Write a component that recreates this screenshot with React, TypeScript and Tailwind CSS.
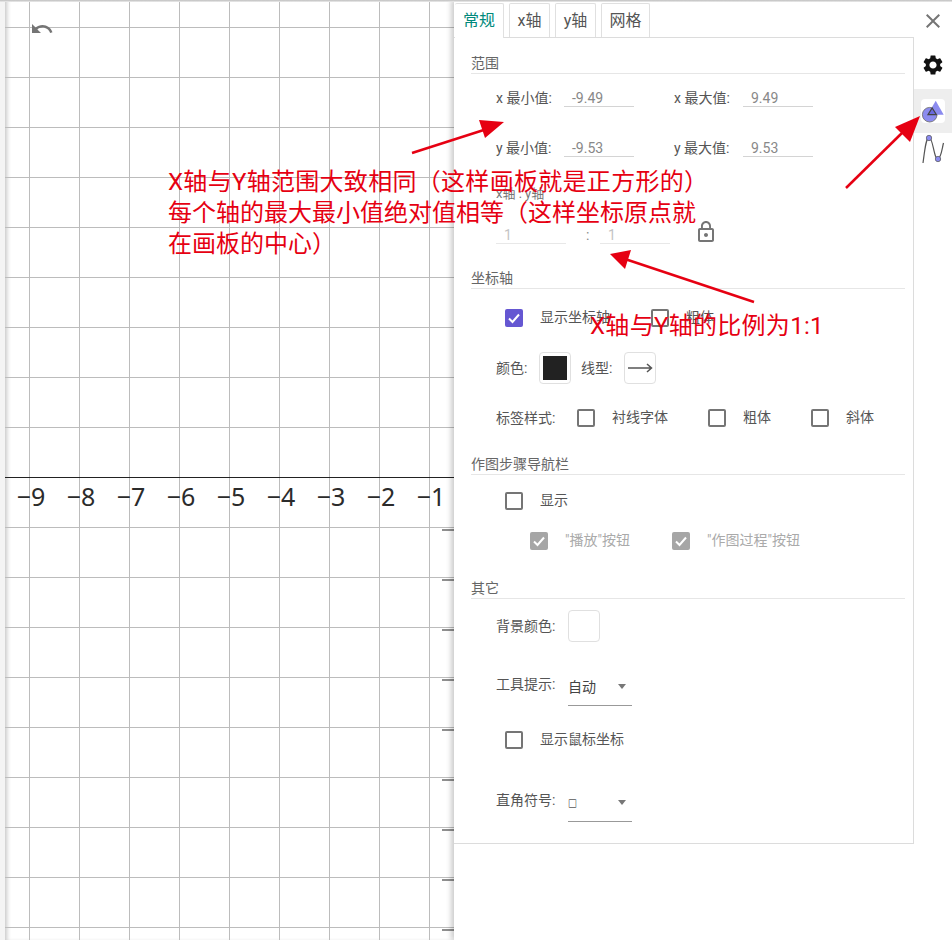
import type { ReactNode } from 'react';
import { MdClose, MdLockOutline, MdSettings, MdUndo } from 'react-icons/md';

const font = "font-['Roboto','Noto_Sans_CJK_SC',sans-serif]";
const xTicks = [-9, -8, -7, -6, -5, -4, -3, -2, -1];
const vLines = [29.5, 79.5, 129.5, 179.5, 229.5, 279.5, 329.5, 379.5, 429.5];
const hLines = [27.5, 77.5, 127.5, 177.5, 227.5, 277.5, 327.5, 377.5, 427.5, 527.5, 577.5, 627.5, 677.5, 727.5, 777.5, 827.5, 877.5, 927.5];
const yTicks = [530, 580, 630, 680, 730, 780, 830, 880, 930];

function Heading({ children, className }: { children: ReactNode; className: string }) {
  return (
    <div className={`h-[21px] border-b border-[#e6e6e6] text-[14px] leading-[20px] text-[#666] ${className}`}>
      {children}
    </div>
  );
}

function Checkbox({ checked, disabled }: { checked?: boolean; disabled?: boolean }) {
  if (checked) {
    return (
      <span className={`flex h-[18px] w-[18px] shrink-0 items-center justify-center rounded-[2px] ${disabled ? 'bg-[#a6a6a6]' : 'bg-[#6557d2]'}`}>
        <svg width="14" height="14" viewBox="0 0 14 14" fill="none">
          <path d="M2 7.5 L5.5 11 L12 3.5" stroke="#fff" strokeWidth="2" />
        </svg>
      </span>
    );
  }
  return <span className="h-[18px] w-[18px] shrink-0 rounded-[2px] border-2 border-[#757575]" />;
}

function Field({ value, faint, width = 'w-[70px]' }: { value: string; faint?: boolean; width?: string }) {
  return (
    <div className={`h-[21px] ${width} border-b pl-[8px] pt-[3px] leading-[18px] ${faint ? 'border-[#e8e8e8] text-[#c4c4c4]' : 'border-[#d4d4d4] text-[#888]'}`}>
      {value}
    </div>
  );
}

function Select({ children }: { children: ReactNode }) {
  return (
    <div className="flex h-[39px] w-[64px] items-center justify-between border-b border-[#999] pr-[6px] pt-[2px] text-[#444]">
      {children}
      <svg width="8" height="5" viewBox="0 0 8 5" className="mb-[2px]">
        <path d="M0 0 H8 L4 5 Z" fill="#777" />
      </svg>
    </div>
  );
}

export default function App() {
  return (
    <div className={`relative flex h-[940px] w-[952px] overflow-hidden bg-white text-[14px] ${font}`}>
      <div className="absolute left-0 top-0 z-20 h-[2px] w-full bg-gradient-to-b from-[#bdbdbd] to-[#eeeeee]" />

      {/* Left strip */}
      <div className="w-[5px] shrink-0 bg-[#f4f4f4]" />

      {/* Graphics view */}
      <div className="relative w-[449px] shrink-0 shadow-[inset_4px_0_4px_-2px_rgba(0,0,0,0.22)]">
        <svg width="449" height="940" viewBox="5 0 449 940" className="absolute left-0 top-0">
          {vLines.map((x) => (
            <line key={x} x1={x} x2={x} y1="0" y2="940" stroke="#bcbcbc" />
          ))}
          {hLines.map((y) => (
            <line key={y} x1="5" x2="454" y1={y} y2={y} stroke="#bcbcbc" />
          ))}
          <line x1="5" x2="454" y1="477.5" y2="477.5" stroke="#222" />
          {yTicks.map((y) => (
            <line key={y} x1="442" x2="454" y1={y} y2={y} stroke="#444" strokeWidth="1.2" />
          ))}
          {xTicks.map((n, i) => (
            <text
              key={n}
              x={31 + i * 50}
              y="506"
              textAnchor="middle"
              fill="#2b2b2b"
              className="font-['Noto_Sans',sans-serif] text-[25px]"
            >
              {`\u2212${-n}`}
            </text>
          ))}
        </svg>
        <MdUndo size={24} className="absolute left-[25px] top-[17px] text-[#757575]" />
      </div>

      {/* Settings panel */}
      <div className="relative z-10 flex w-[498px] shrink-0 shadow-[-3px_0_5px_rgba(0,0,0,0.2)]">
        <div className="w-[460px] shrink-0">
          {/* Tabs */}
          <div className="flex h-[37px] items-end gap-[5px] pl-[1px] pt-[3px] text-[16px]">
            <div className="relative z-10 -mb-px flex h-[35px] w-[49px] items-center justify-center rounded-t-[2px] border-r border-t border-[#e0e0e0] bg-white text-[#00897b]">常规</div>
            <div className="flex h-[34px] w-[41px] items-center justify-center rounded-t-[2px] border border-b-0 border-[#e0e0e0] text-[#555]">x轴</div>
            <div className="flex h-[34px] w-[41px] items-center justify-center rounded-t-[2px] border border-b-0 border-[#e0e0e0] text-[#555]">y轴</div>
            <div className="flex h-[34px] w-[49px] items-center justify-center rounded-t-[2px] border border-b-0 border-[#e0e0e0] text-[#555]">网格</div>
          </div>

          <div className="h-[807px] border-b border-r border-t border-[#dcdcdc] pl-[17px] pr-[8px] text-[#555]">
            <Heading className="mt-[15px]">范围</Heading>
            <div className="ml-[25px] mt-[12px] flex items-end">
              <span className="w-[68px] leading-[18px]">x 最小值:</span>
              <Field value="-9.49" />
              <span className="ml-[40px] w-[69px] leading-[18px]">x 最大值:</span>
              <Field value="9.49" />
            </div>
            <div className="ml-[25px] mt-[29px] flex items-end">
              <span className="w-[68px] leading-[18px]">y 最小值:</span>
              <Field value="-9.53" />
              <span className="ml-[40px] w-[69px] leading-[18px]">y 最大值:</span>
              <Field value="9.53" />
            </div>
            <div className="ml-[25px] mt-[27px] h-[20px] text-[13px] leading-[20px] text-[#777]">x轴 : y轴</div>
            <div className="ml-[25px] mt-[19px] flex items-end">
              <Field value="1" faint />
              <span className="w-[34px] pl-[20px] leading-[18px] text-[#888]">:</span>
              <Field value="1" faint />
              <MdLockOutline size={24} className="-mb-[3px] -mt-[3px] ml-[24px] self-start text-[#757575]" />
            </div>

            <Heading className="mt-[24px]">坐标轴</Heading>
            <div className="ml-[34px] mt-[17px] flex h-[24px] items-center">
              <Checkbox checked />
              <span className="ml-[17px] w-[111px] pb-[2px]">显示坐标轴</span>
              <Checkbox />
              <span className="ml-[17px] pb-[2px]">粗体</span>
            </div>
            <div className="ml-[25px] mt-[22px] flex h-[32px] items-center">
              <span className="w-[43px]">颜色:</span>
              <div className="flex h-[32px] w-[32px] items-center justify-center rounded-[4px] border border-[#e0e0e0]">
                <div className="h-[24px] w-[24px] bg-[#222]" />
              </div>
              <span className="ml-[10px] w-[43px]">线型:</span>
              <div className="flex h-[32px] w-[32px] items-center justify-center rounded-[4px] border border-[#e0e0e0]">
                <svg width="26" height="12" viewBox="0 0 26 12" fill="none">
                  <path d="M1 6 H24.5 M20 2 L24.5 6 L20 10" stroke="#555" strokeWidth="1.5" />
                </svg>
              </div>
            </div>
            <div className="ml-[25px] mt-[22px] flex h-[24px] items-center">
              <span className="w-[81px]">标签样式:</span>
              <Checkbox />
              <span className="ml-[17px] w-[96px] pb-[2px]">衬线字体</span>
              <Checkbox />
              <span className="ml-[17px] w-[68px] pb-[2px]">粗体</span>
              <Checkbox />
              <span className="ml-[17px] pb-[2px]">斜体</span>
            </div>

            <Heading className="mt-[24px]">作图步骤导航栏</Heading>
            <div className="ml-[34px] mt-[14px] flex h-[24px] items-center">
              <Checkbox />
              <span className="ml-[17px] pb-[2px]">显示</span>
            </div>
            <div className="ml-[59px] mt-[16px] flex h-[24px] items-center text-[#aaa]">
              <Checkbox checked disabled />
              <span className="ml-[17px] w-[107px] pb-[2px]">"播放"按钮</span>
              <Checkbox checked disabled />
              <span className="ml-[17px] pb-[2px]">"作图过程"按钮</span>
            </div>

            <Heading className="mt-[25px]">其它</Heading>
            <div className="ml-[25px] mt-[11px] flex h-[32px] items-center">
              <span className="w-[72px]">背景颜色:</span>
              <div className="h-[32px] w-[32px] rounded-[4px] border border-[#e0e0e0]" />
            </div>
            <div className="ml-[25px] mt-[25px] flex h-[39px] items-center">
              <span className="mb-[5px] w-[72px]">工具提示:</span>
              <Select>自动</Select>
            </div>
            <div className="ml-[34px] mt-[22px] flex h-[24px] items-center">
              <Checkbox />
              <span className="ml-[17px] pb-[2px]">显示鼠标坐标</span>
            </div>
            <div className="ml-[25px] mt-[31px] flex h-[39px] items-center">
              <span className="mb-[5px] w-[72px]">直角符号:</span>
              <Select>
                <span className="pt-[3px] text-[9px] font-bold text-black">□</span>
              </Select>
            </div>
          </div>
        </div>

        {/* Icon rail */}
        <div className="flex w-[38px] shrink-0 flex-col items-center">
          <div className="flex h-[41px] w-full items-center justify-center">
            <MdClose size={24} className="text-[#757575]" />
          </div>
          <div className="flex h-[48px] w-full items-center justify-center">
            <MdSettings size={24} className="text-[#111]" />
          </div>
          <div className="flex h-[44px] w-full items-center justify-center bg-[#eeeeee]">
            <div className="h-[24px] w-[24px] rounded-[4px] bg-white">
              <svg width="24" height="24" viewBox="0 0 24 24">
                <circle cx="8.7" cy="15.7" r="7.3" fill="#8b8bef" stroke="#666" strokeWidth="0.8" />
                <path d="M14.7 1.7 L22.7 15.7 H6.7 Z" fill="#8b8bef" />
                <path d="M11.2 9 L15.4 15.7 H7 Z" fill="#6a6ae0" stroke="#444" strokeWidth="1.2" />
              </svg>
            </div>
          </div>
          <div className="flex h-[40px] w-full items-start justify-center pt-[1px]">
            <svg width="24" height="30" viewBox="0 0 24 30" fill="none">
              <path d="M2 29 C4 14 5 4 8 3.5 C12 3 13 26 17 25 C20 24 21 15 22.5 9" stroke="#555" strokeWidth="1.2" />
              <circle cx="8" cy="4" r="2.7" fill="#8b8bef" stroke="#555" strokeWidth="0.7" />
              <circle cx="17" cy="25" r="2.7" fill="#8b8bef" stroke="#555" strokeWidth="0.7" />
            </svg>
          </div>
        </div>
      </div>

      {/* Annotations drawn over the screenshot */}
      <svg width="952" height="940" className="pointer-events-none absolute left-0 top-0 z-30">
        <g stroke="#e60012" strokeWidth="2.5">
          <line x1="412" y1="153" x2="490" y2="128" />
          <line x1="846" y1="188" x2="905" y2="130" />
          <line x1="754" y1="302" x2="625" y2="259" />
        </g>
        <g fill="#e60012">
          <path d="M504 122 L479 120 L485 138 Z" />
          <path d="M920 116 L895 127 L910 142 Z" />
          <path d="M610 254 L631 250 L625 269 Z" />
        </g>
      </svg>
      <div className="absolute left-[168px] top-[167px] z-30 text-[24px] leading-[31px] text-[#e60012]">
        <p className="tracking-[0.3px]">X轴与Y轴范围大致相同（这样画板就是正方形的）</p>
        <p>每个轴的最大最小值绝对值相等（这样坐标原点就</p>
        <p>在画板的中心）</p>
      </div>
      <div className="absolute left-[590px] top-[311px] z-30 text-[24px] leading-[31px] tracking-[0.3px] text-[#e60012]">
        X轴与Y轴的比例为1:1
      </div>
    </div>
  );
}
